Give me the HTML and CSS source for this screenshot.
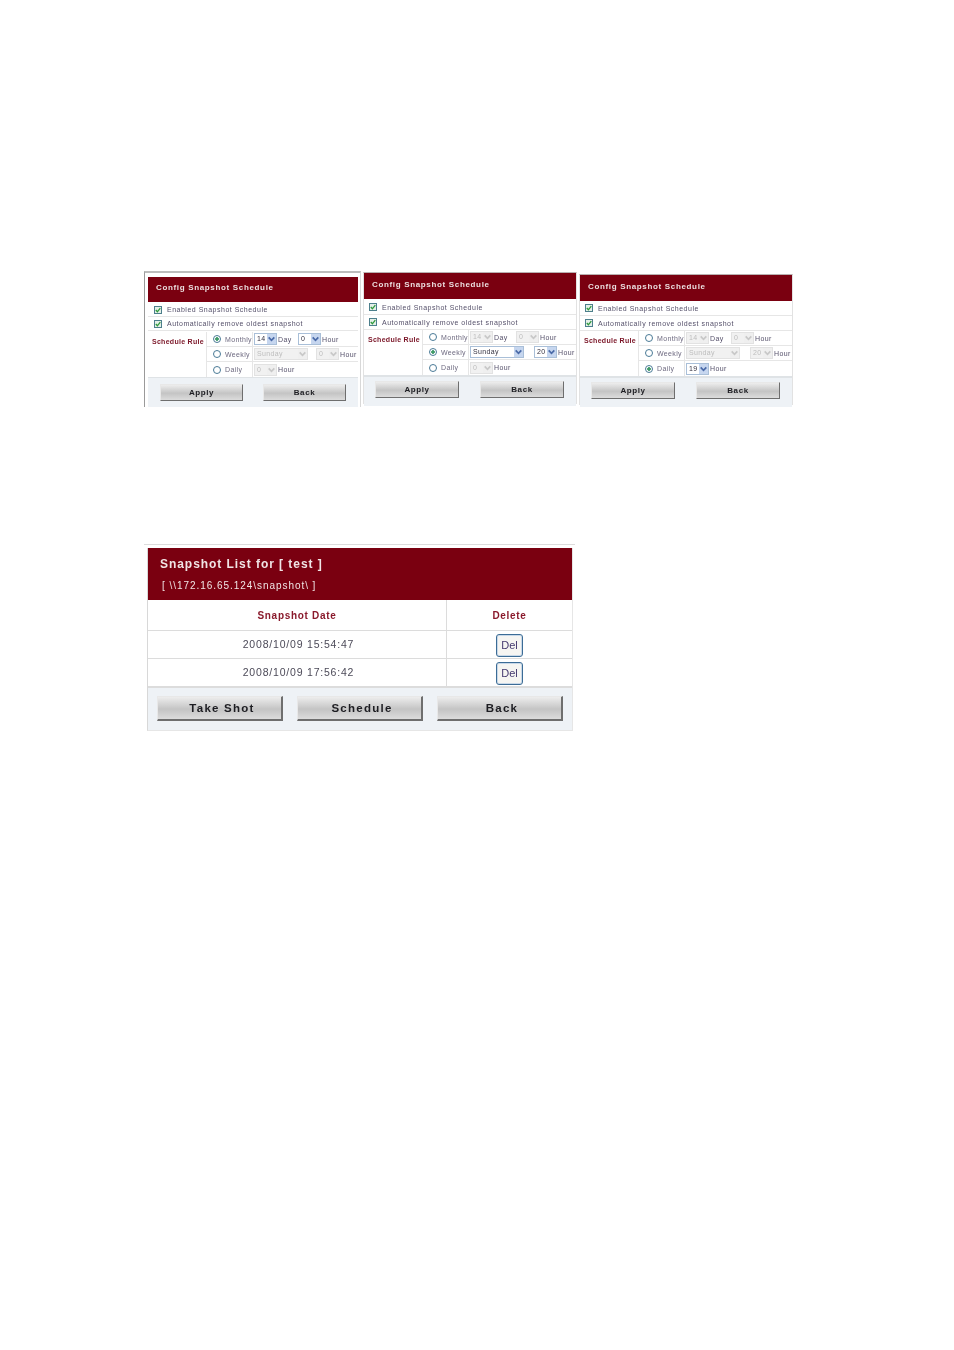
FILE: index.html
```html
<!DOCTYPE html>
<html lang="en">
<head>
    <meta charset="UTF-8">
    <title>Snapshot Schedule</title>
    <link rel="stylesheet" href="styles.css">
</head>
<body>
    <svg width="0" height="0" class="defs">
        <symbol id="tick" viewBox="0 0 8 8"><rect x=".5" y=".5" width="7" height="7" fill="#e4efe8" stroke="#4d7f8c"/><path d="M1.8 4 L3.4 5.8 L6.3 2.2" fill="none" stroke="#2f9a3c" stroke-width="1.3"/></symbol>
        <symbol id="chev" viewBox="0 0 8 8"><path d="M1.5 2.5 L4 5.2 L6.5 2.5" fill="none" stroke="currentColor" stroke-width="1.5"/></symbol>
    </svg>

    <div class="shots">
        <div class="panel panel-first">
            <div class="panel-head">Config Snapshot Schedule</div>
            <div class="check-row"><svg class="tick"><use href="#tick"/></svg>Enabled Snapshot Schedule</div>
            <div class="check-row"><svg class="tick"><use href="#tick"/></svg>Automatically remove oldest snapshot</div>
            <div class="rule">
                <div class="rule-label">Schedule Rule</div>
                <div class="rule-rows">
                    <div class="rule-row">
                        <div class="rule-name"><span class="radio on"></span>Monthly</div>
                        <div class="rule-ctl"><span class="sel sel-num"><b>14</b><i><svg><use href="#chev"/></svg></i></span><span class="unit unit-day">Day</span><span class="sel sel-num"><b>0</b><i><svg><use href="#chev"/></svg></i></span><span class="unit">Hour</span></div>
                    </div>
                    <div class="rule-row">
                        <div class="rule-name"><span class="radio"></span>Weekly</div>
                        <div class="rule-ctl"><span class="sel sel-week off"><b>Sunday</b><i><svg><use href="#chev"/></svg></i></span><span class="sel sel-num off"><b>0</b><i><svg><use href="#chev"/></svg></i></span><span class="unit">Hour</span></div>
                    </div>
                    <div class="rule-row">
                        <div class="rule-name"><span class="radio"></span>Daily</div>
                        <div class="rule-ctl"><span class="sel sel-num off"><b>0</b><i><svg><use href="#chev"/></svg></i></span><span class="unit">Hour</span></div>
                    </div>
                </div>
            </div>
            <div class="panel-foot">
                <span class="btn">Apply</span>
                <span class="btn">Back</span>
            </div>
        </div>

        <div class="panel panel-second">
            <div class="panel-head">Config Snapshot Schedule</div>
            <div class="check-row"><svg class="tick"><use href="#tick"/></svg>Enabled Snapshot Schedule</div>
            <div class="check-row"><svg class="tick"><use href="#tick"/></svg>Automatically remove oldest snapshot</div>
            <div class="rule">
                <div class="rule-label">Schedule Rule</div>
                <div class="rule-rows">
                    <div class="rule-row">
                        <div class="rule-name"><span class="radio"></span>Monthly</div>
                        <div class="rule-ctl"><span class="sel sel-num off"><b>14</b><i><svg><use href="#chev"/></svg></i></span><span class="unit unit-day">Day</span><span class="sel sel-num off"><b>0</b><i><svg><use href="#chev"/></svg></i></span><span class="unit">Hour</span></div>
                    </div>
                    <div class="rule-row">
                        <div class="rule-name"><span class="radio on"></span>Weekly</div>
                        <div class="rule-ctl"><span class="sel sel-week"><b>Sunday</b><i><svg><use href="#chev"/></svg></i></span><span class="sel sel-num"><b>20</b><i><svg><use href="#chev"/></svg></i></span><span class="unit">Hour</span></div>
                    </div>
                    <div class="rule-row">
                        <div class="rule-name"><span class="radio"></span>Daily</div>
                        <div class="rule-ctl"><span class="sel sel-num off"><b>0</b><i><svg><use href="#chev"/></svg></i></span><span class="unit">Hour</span></div>
                    </div>
                </div>
            </div>
            <div class="panel-foot">
                <span class="btn">Apply</span>
                <span class="btn">Back</span>
            </div>
        </div>

        <div class="panel panel-third">
            <div class="panel-head">Config Snapshot Schedule</div>
            <div class="check-row"><svg class="tick"><use href="#tick"/></svg>Enabled Snapshot Schedule</div>
            <div class="check-row"><svg class="tick"><use href="#tick"/></svg>Automatically remove oldest snapshot</div>
            <div class="rule">
                <div class="rule-label">Schedule Rule</div>
                <div class="rule-rows">
                    <div class="rule-row">
                        <div class="rule-name"><span class="radio"></span>Monthly</div>
                        <div class="rule-ctl"><span class="sel sel-num off"><b>14</b><i><svg><use href="#chev"/></svg></i></span><span class="unit unit-day">Day</span><span class="sel sel-num off"><b>0</b><i><svg><use href="#chev"/></svg></i></span><span class="unit">Hour</span></div>
                    </div>
                    <div class="rule-row">
                        <div class="rule-name"><span class="radio"></span>Weekly</div>
                        <div class="rule-ctl"><span class="sel sel-week off"><b>Sunday</b><i><svg><use href="#chev"/></svg></i></span><span class="sel sel-num off"><b>20</b><i><svg><use href="#chev"/></svg></i></span><span class="unit">Hour</span></div>
                    </div>
                    <div class="rule-row">
                        <div class="rule-name"><span class="radio on"></span>Daily</div>
                        <div class="rule-ctl"><span class="sel sel-num"><b>19</b><i><svg><use href="#chev"/></svg></i></span><span class="unit">Hour</span></div>
                    </div>
                </div>
            </div>
            <div class="panel-foot">
                <span class="btn">Apply</span>
                <span class="btn">Back</span>
            </div>
        </div>
    </div>

    <div class="list">
        <div class="list-inner">
            <div class="list-head">
                <div class="list-title">Snapshot List for [ test ]</div>
                <div class="list-path">[ \\172.16.65.124\snapshot\ ]</div>
            </div>
            <div class="list-row list-row-top">
                <div class="list-date list-th">Snapshot Date</div>
                <div class="list-del list-th">Delete</div>
            </div>
            <div class="list-row">
                <div class="list-date">2008/10/09 15:54:47</div>
                <div class="list-del"><span class="del-btn">Del</span></div>
            </div>
            <div class="list-row">
                <div class="list-date">2008/10/09 17:56:42</div>
                <div class="list-del"><span class="del-btn">Del</span></div>
            </div>
            <div class="list-foot">
                <span class="btn btn-big">Take Shot</span>
                <span class="btn btn-big">Schedule</span>
                <span class="btn btn-big">Back</span>
            </div>
        </div>
    </div>
</body>
</html>
```

FILE: styles.css
```css
body {
    margin: 0;
    background: #fff;
    font-family: "Liberation Sans", Arial, sans-serif;
    height: 1350px;
    overflow: hidden;
}
.defs {
    display: block;
    height: 0;
}

.shots {
    display: flex;
    align-items: flex-start;
    padding: 271px 0 0 144px;
}
.panel {
    box-sizing: border-box;
    width: 214px;
    background: #fff;
    filter: blur(.35px);
}
.panel-first {
    width: 217px;
    height: 136px;
    padding: 4px 2px 0 3px;
    border-top: 2px solid #bdbdbd;
    border-left: 1px solid #9a9a9a;
    border-right: 1px solid #d8d8d8;
}
.panel-second {
    margin: 1px 0 0 2px;
    height: 132px;
    border: 1px solid #e2e2e2;
    border-top-color: #b9b0b0;
}
.panel-third {
    margin: 3px 0 0 2px;
    height: 131px;
    border: 1px solid #e2e2e2;
    border-top-color: #b9b0b0;
}
.panel-head {
    height: 26px;
    line-height: 24px;
    padding-left: 8px;
    background: #7a0010;
    color: #ecdfe0;
    font-size: 8px;
    font-weight: bold;
    letter-spacing: .66px;
}
.panel-first .panel-head {
    height: 25px;
    line-height: 22px;
}
.check-row {
    display: flex;
    align-items: center;
    height: 14px;
    margin-top: 1px;
    padding-left: 5px;
    border-bottom: 1px solid #e6e6e6;
    color: #55506a;
    font-size: 7px;
    letter-spacing: .5px;
    white-space: nowrap;
}
.check-row + .check-row {
    margin-top: 0;
}
.panel-first .check-row {
    height: 13px;
    padding-left: 6px;
}
.panel-third .check-row {
    margin-top: 0;
}
.tick {
    width: 8px;
    height: 8px;
    margin-right: 5px;
    flex: none;
}

.rule {
    display: flex;
    height: 45px;
    border-bottom: 2px solid #dfe3e6;
}
.panel-first .rule {
    margin-top: 1px;
    border-bottom-width: 1px;
}
.rule-label {
    width: 59px;
    flex: none;
    box-sizing: border-box;
    padding: 6px 0 0 4px;
    border-right: 1px solid #e6e6e6;
    color: #7a1426;
    font-size: 7px;
    font-weight: bold;
    letter-spacing: .28px;
    white-space: nowrap;
}
.rule-rows {
    flex: 1;
    min-width: 0;
}
.rule-row {
    display: flex;
    height: 15px;
    box-sizing: border-box;
    border-bottom: 1px solid #e6e6e6;
}
.rule-row:last-child {
    border-bottom: none;
}
.rule-name {
    display: flex;
    align-items: center;
    width: 46px;
    flex: none;
    box-sizing: border-box;
    padding-left: 6px;
    border-right: 1px solid #e6e6e6;
    color: #6e6a80;
    font-size: 7px;
    letter-spacing: .35px;
    white-space: nowrap;
}
.radio {
    box-sizing: border-box;
    width: 8px;
    height: 8px;
    margin-right: 4px;
    flex: none;
    border: 1px solid #4a7a96;
    border-radius: 50%;
    background: #fff;
}
.radio.on {
    background: radial-gradient(circle, #3f9a68 0 1.5px, #fff 2.1px);
}
.rule-ctl {
    display: flex;
    align-items: center;
    padding-left: 1px;
    color: #55506a;
    font-size: 7px;
    letter-spacing: .35px;
    white-space: nowrap;
}
.sel {
    display: flex;
    box-sizing: border-box;
    height: 12px;
    flex: none;
    border: 1px solid #a9bfd8;
    background: #fff;
    color: #33303f;
    font-size: 7px;
    line-height: 10px;
}
.sel b {
    flex: 1;
    padding-left: 2px;
    font-weight: normal;
}
.sel i {
    width: 9px;
    background: #c6d6ef;
    color: #4a6aa8;
}
.sel svg {
    display: block;
    width: 9px;
    height: 10px;
}
.sel-num {
    width: 23px;
}
.sel-week {
    width: 54px;
    margin-right: 8px;
}
.panel-second .sel-week,
.panel-third .sel-week {
    margin-right: 10px;
}
.sel.off {
    border-color: #e2e2e2;
    background: #f1f1f1;
    color: #bdbdbd;
}
.sel.off i {
    background: #efefef;
    color: #c8c8c8;
}
.unit {
    margin-left: 1px;
}
.unit-day {
    width: 20px;
}
.panel-second .unit-day {
    width: 22px;
}
.panel-third .unit-day {
    width: 21px;
}

.panel-foot {
    display: flex;
    justify-content: space-between;
    box-sizing: border-box;
    height: 29px;
    padding: 4px 12px 0 11px;
    background: #eef2f6;
}
.panel-first .panel-foot {
    padding: 6px 12px 0;
}
.panel-first .btn {
    width: 83px;
}
.btn {
    display: block;
    box-sizing: border-box;
    width: 84px;
    height: 17px;
    border: 1px solid;
    border-color: #e8e8e8 #6e6e6e #6e6e6e #e8e8e8;
    background: linear-gradient(#ededed, #c4c4c4 55%, #dcdcdc);
    color: #1d1d22;
    font-size: 8px;
    font-weight: bold;
    letter-spacing: .6px;
    line-height: 15px;
    text-align: center;
}

.list {
    box-sizing: border-box;
    width: 431px;
    margin: 137px 0 0 144px;
    padding: 3px 2px 0 3px;
    border-top: 1px solid #dcdcdc;
    filter: blur(.35px);
}
.list-inner {
    border: 1px solid #e6e6e6;
    border-top: none;
    border-left: 1px solid #d8d8d8;
}
.list-head {
    height: 52px;
    box-sizing: border-box;
    padding: 9px 0 0 12px;
    background: #7a0010;
    color: #f0e4e5;
}
.list-title {
    font-size: 12px;
    font-weight: bold;
    letter-spacing: .95px;
}
.list-path {
    margin: 9px 0 0 2px;
    font-size: 10px;
    letter-spacing: .95px;
}
.list-row {
    display: flex;
    box-sizing: border-box;
    height: 28px;
    border-bottom: 1px solid #dcdcdc;
    color: #4c4a58;
    font-size: 10.5px;
    letter-spacing: .8px;
}
.list-row-top {
    height: 31px;
    font-size: 10px;
    letter-spacing: .7px;
}
.list-date {
    display: flex;
    align-items: center;
    justify-content: center;
    width: 299px;
    flex: none;
    box-sizing: border-box;
    padding: 0 0 2px 3px;
    border-right: 1px solid #dcdcdc;
}
.list-del {
    display: flex;
    align-items: center;
    justify-content: center;
    flex: 1;
}
.list-th {
    color: #8a1a2c;
    font-weight: bold;
    padding: 0;
}
.del-btn {
    box-sizing: border-box;
    width: 27px;
    height: 23px;
    margin-top: 1px;
    border: 1px solid #3c6c96;
    border-radius: 3px;
    background: #f6f5f2;
    box-shadow: inset 0 0 0 1px #c8d8e8;
    color: #44386e;
    font-size: 11px;
    letter-spacing: 0;
    line-height: 21px;
    text-align: center;
}
.list-foot {
    display: flex;
    gap: 14px;
    box-sizing: border-box;
    height: 43px;
    padding: 8px 0 0 9px;
    background: #eef2f6;
    border-top: 1px solid #dcdcdc;
}
.btn-big {
    width: 126px;
    height: 25px;
    padding-left: 5px;
    border-width: 1px 2px 2px 1px;
    font-size: 11.5px;
    letter-spacing: 1.25px;
    line-height: 23px;
}
```
